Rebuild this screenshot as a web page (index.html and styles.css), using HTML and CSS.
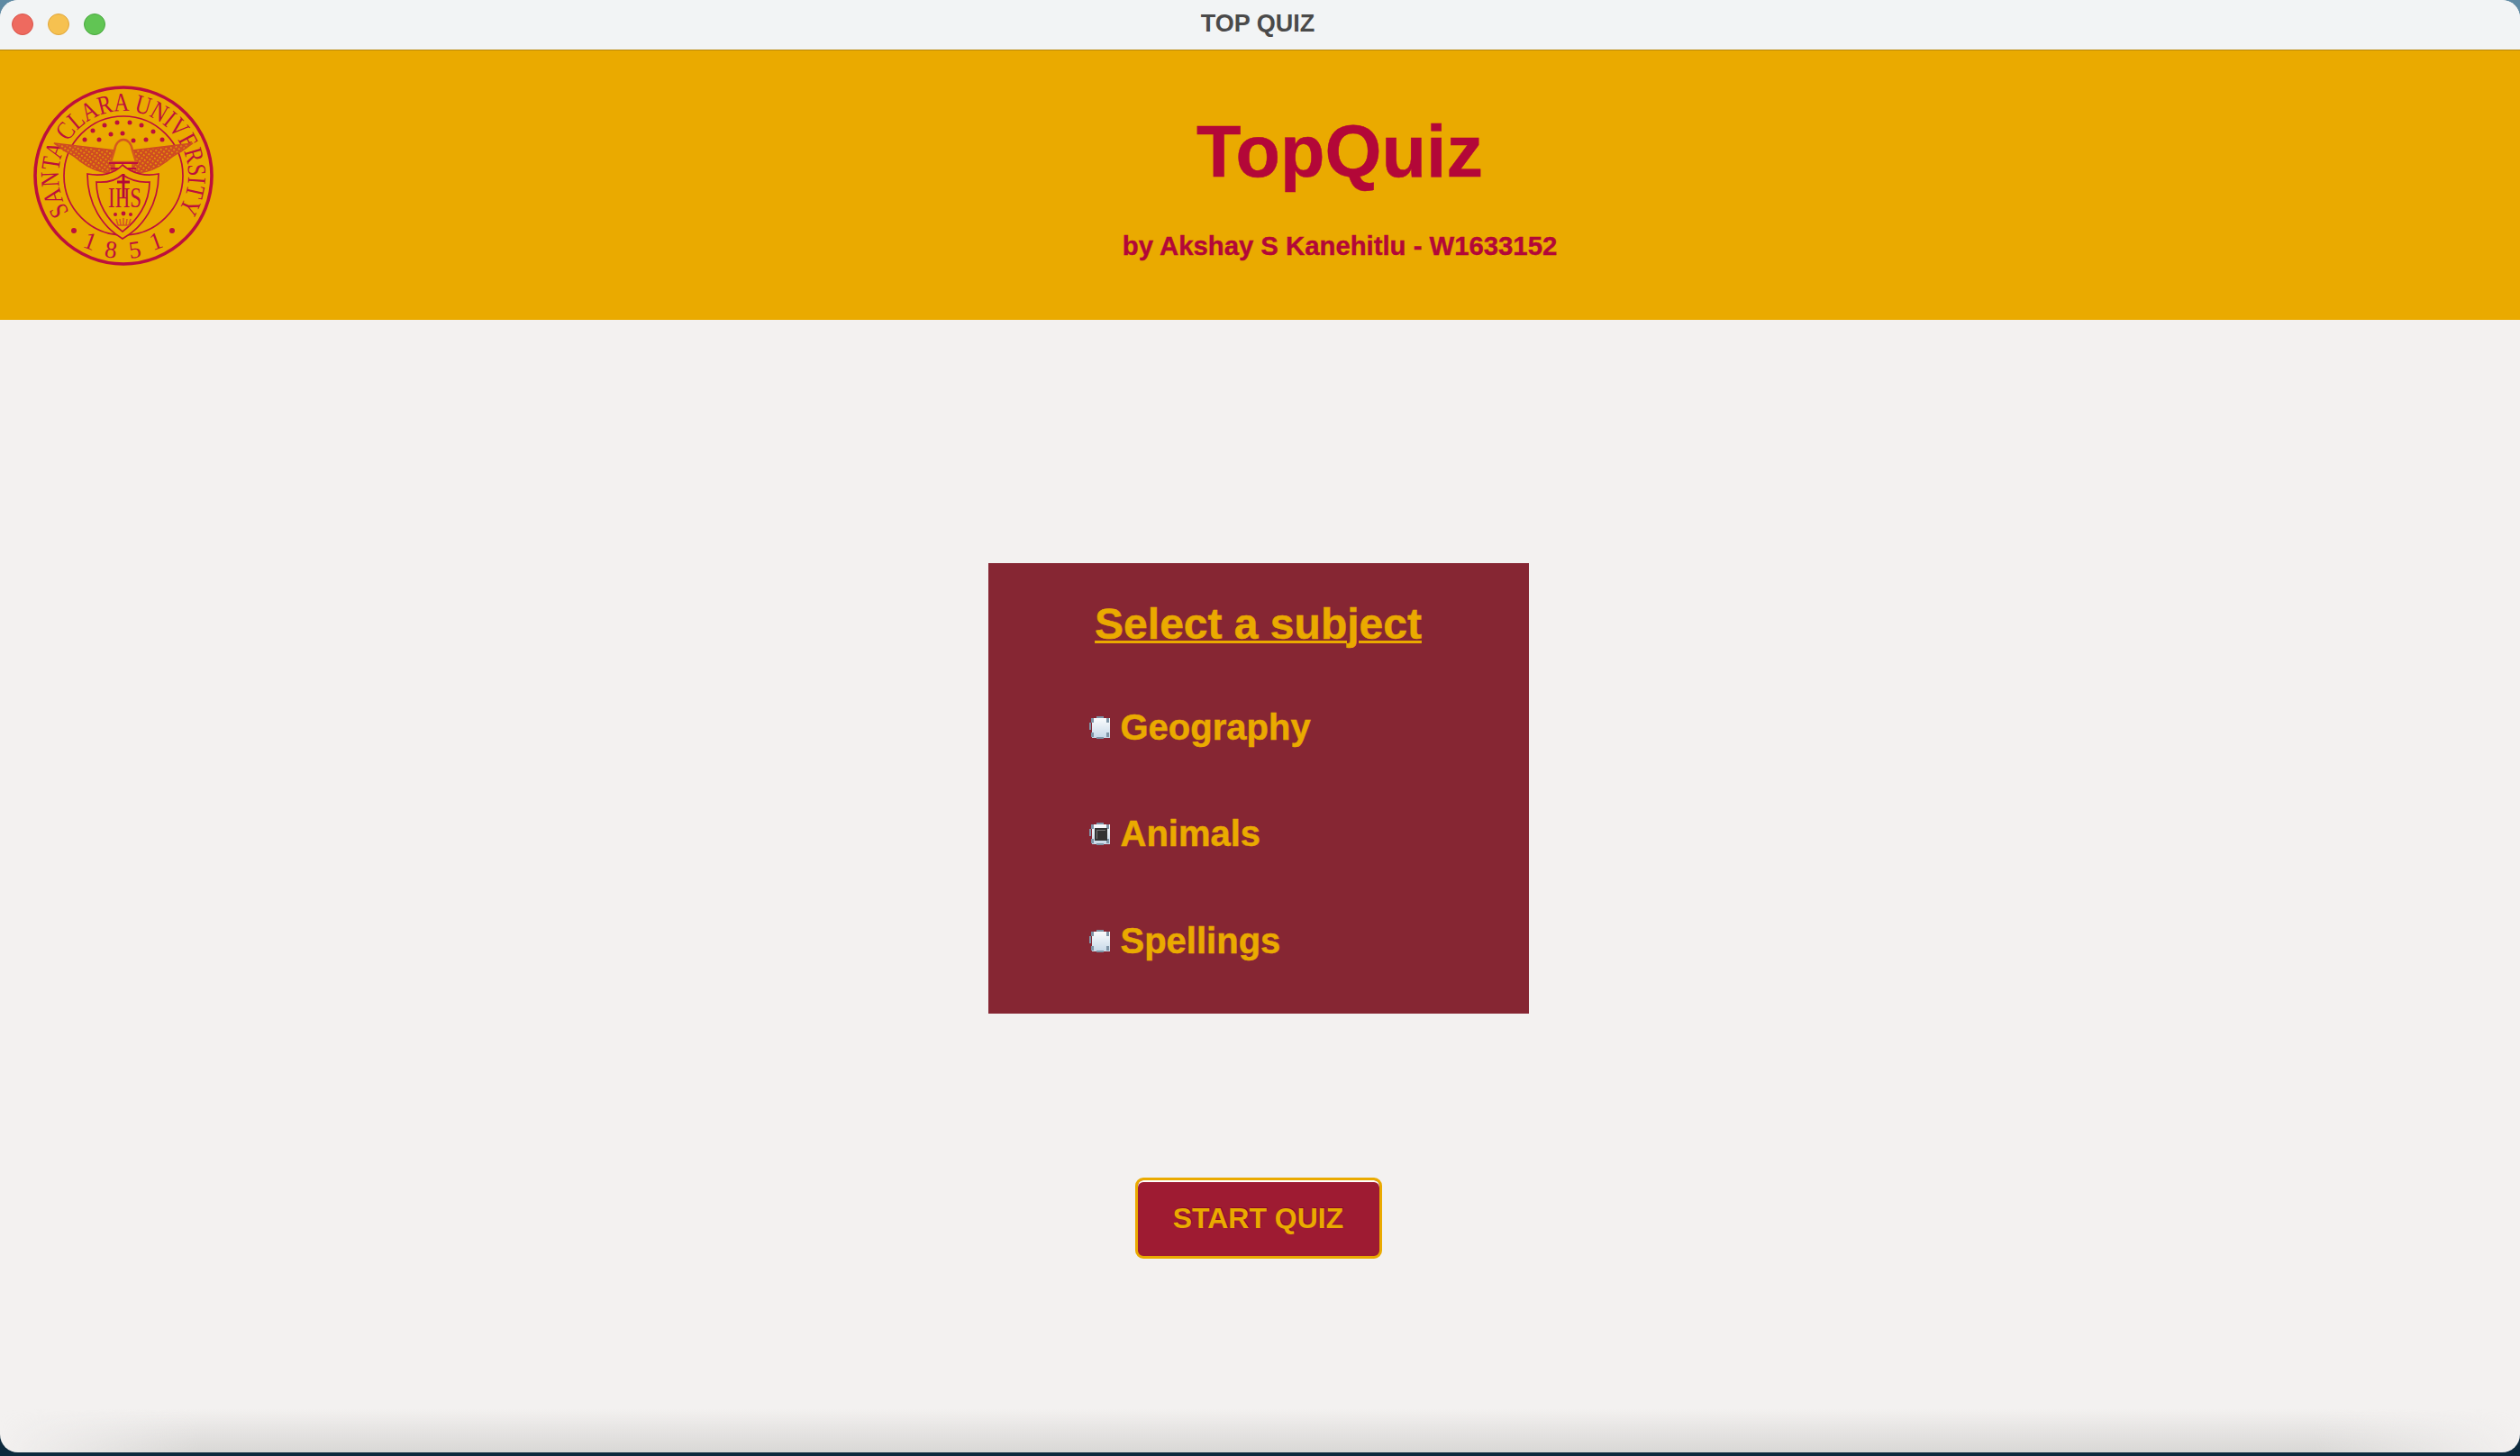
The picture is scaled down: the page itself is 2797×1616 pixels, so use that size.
FILE: index.html
```html
<html>

<head>
    <title>TOP QUIZ</title>
    <link rel="stylesheet" href="styles.css">
</head>

<body>
    <div class="window">
        <div class="titlebar">
            <div class="lights">
                <span class="light red"></span>
                <span class="light yellow"></span>
                <span class="light green"></span>
            </div>
            <span class="windowTitle">TOP QUIZ</span>
        </div>

        <header class="banner">
            <svg class="seal" viewBox="0 0 200 200">
                <defs>
                    <path id="topArc" d="M 40 140 A 72 72 0 1 1 160 140" />
                    <pattern id="feathers" width="4" height="4" patternUnits="userSpaceOnUse" patternTransform="rotate(35)">
                        <rect width="4" height="4" fill="#cf4a22" />
                        <rect width="1.6" height="1.6" fill="#eaaa00" />
                    </pattern>
                </defs>
                <circle cx="100" cy="100" r="98" class="ring" />
                <circle cx="100" cy="100" r="66" class="thin" />
                <text class="sealText"><textPath href="#topArc" startOffset="0" textLength="308" lengthAdjust="spacingAndGlyphs">SANTA CLARA UNIVERSITY</textPath></text>
                <text class="sealYear" x="60" y="181" text-anchor="middle" transform="rotate(20 60 181)">1</text>
                <text class="sealYear" x="85" y="191" text-anchor="middle" transform="rotate(8 85 191)">8</text>
                <text class="sealYear" x="114" y="191" text-anchor="middle" transform="rotate(-8 114 191)">5</text>
                <text class="sealYear" x="139" y="181" text-anchor="middle" transform="rotate(-20 139 181)">1</text>
                <circle cx="45" cy="161" r="3" class="fill" />
                <circle cx="154" cy="161" r="3" class="fill" />
                <g class="fill">
                    <circle cx="66" cy="50" r="2.5" />
                    <circle cx="79" cy="44" r="2.5" />
                    <circle cx="93" cy="41" r="2.5" />
                    <circle cx="107" cy="41" r="2.5" />
                    <circle cx="120" cy="44" r="2.5" />
                    <circle cx="133" cy="51" r="2.5" />
                    <circle cx="57" cy="60" r="2.5" />
                    <circle cx="73" cy="60" r="2.5" />
                    <circle cx="86" cy="54" r="2.5" />
                    <circle cx="99" cy="53" r="2.5" />
                    <circle cx="111" cy="61" r="2.5" />
                    <circle cx="125" cy="60" r="2.5" />
                    <circle cx="143" cy="60" r="2.5" />
                </g>
                <!-- eagle -->
                <path class="wing" d="M 23 64 L 90 72 L 90 98 L 84 97 C 70 96 60 90 52 84 C 46 78 40 75 36 73 Z" />
                <path class="wing" d="M 177 64 L 110 72 L 110 98 L 116 97 C 130 96 140 90 148 84 C 154 78 160 75 164 73 Z" />
                <path class="head" d="M 86 85 L 90 72 C 92 56 108 56 110 72 L 114 85 Z" />
                <path class="beak" d="M 84 86 L 116 86 M 86 92 L 114 92" />
                <!-- shield -->
                <path class="shieldFill" d="M 60 98 C 75 101 90 98 99 88 C 110 98 125 101 139 98 C 139 132 122 157 99 170 C 77 157 60 132 60 98 Z" />
                <path class="thin" d="M 70 107 C 82 108 92 105 99 99 C 108 105 118 108 129 107 C 129 131 115 150 99 162 C 83 150 70 131 70 107 Z" />
                <path class="cross" d="M 100 98 L 100 124 M 93 107 L 107 107" />
                <text class="ihs" x="83" y="135" textLength="37" lengthAdjust="spacingAndGlyphs">IHS</text>
                <path class="crown" d="M 92 148 L 94 155 L 106 155 L 108 148 M 96 148 L 97 155 M 100 147 L 100 155 M 104 148 L 103 155" />
                <circle cx="91" cy="143" r="2" class="fill" />
                <circle cx="100" cy="142" r="2.4" class="fill" />
                <circle cx="108" cy="143" r="2" class="fill" />
            </svg>
            <div class="bannerText">
                <h1>TopQuiz</h1>
                <h3>by Akshay S Kanehitlu - W1633152</h3>
            </div>
        </header>

        <main class="content">
            <form class="subjects">
                <h2>Select a subject</h2>
                <label class="subject"><input type="radio" name="subject">Geography</label>
                <label class="subject"><input type="radio" name="subject" checked>Animals</label>
                <label class="subject"><input type="radio" name="subject">Spellings</label>
            </form>
            <button class="start">START QUIZ</button>
        </main>
    </div>
</body>

</html>
```

FILE: styles.css
```css
:root {
    --gold: #eaaa00;
    --red: #b30738;
    --sealRed: #bd0f3c;
    --maroon: #862633;
    --button: #9e1b32;
    --page: #f3f1f0;
    --radioEdge: linear-gradient(#7e94a6, #7e94a6);
    --radioBody: linear-gradient(to bottom, #fbfcfd, #c6d8e8);
}

body {
    margin: 0;
    height: 1616px;
    overflow: hidden;
    font-family: "Liberation Sans", Arial, sans-serif;
    background: linear-gradient(to bottom, #5f8aa3 0, #5f8aa3 40px, #0d2a3d 1570px);
}

.window {
    height: 1612px;
    border-radius: 20px;
    overflow: hidden;
    display: flex;
    flex-direction: column;
    background-color: var(--page);
}

.titlebar {
    height: 55px;
    flex-shrink: 0;
    box-sizing: border-box;
    padding: 0 5px 2px 0;
    display: flex;
    align-items: center;
    justify-content: center;
    position: relative;
    background-color: #f2f4f5;
}

.lights {
    position: absolute;
    left: 13px;
    top: 15px;
    display: flex;
    gap: 16px;
}

.light {
    width: 24px;
    height: 24px;
    box-sizing: border-box;
    border-radius: 50%;
    border: 1px solid;
}

.red {
    background-color: #ee6a5f;
    border-color: #d9534a;
}

.yellow {
    background-color: #f6c150;
    border-color: #e0a63c;
}

.green {
    background-color: #61c554;
    border-color: #4aa83f;
}

.windowTitle {
    font-size: 27px;
    font-weight: bold;
    color: #4a4a4a;
}

.banner {
    height: 300px;
    flex-shrink: 0;
    box-sizing: border-box;
    display: flex;
    align-items: flex-start;
    padding: 39px 60px 0 37px;
    background-color: var(--gold);
    border-top: 1px solid #b8860b;
    color: var(--red);
}

.seal {
    width: 200px;
    height: 200px;
    flex-shrink: 0;
    fill: none;
    stroke: none;
}

.ring {
    stroke: var(--sealRed);
    stroke-width: 3.6;
}

.thin {
    stroke: var(--sealRed);
    stroke-width: 1.7;
    fill: none;
}

.fill {
    fill: var(--sealRed);
}

.wing {
    fill: url(#feathers);
    stroke: #cf4a22;
    stroke-width: 1.5;
}

.head {
    fill: var(--gold);
    stroke: #d4581f;
    stroke-width: 2.5;
}

.beak {
    stroke: var(--sealRed);
    stroke-width: 2;
    fill: none;
}

.shieldFill {
    fill: var(--gold);
    stroke: var(--sealRed);
    stroke-width: 1.7;
}

.cross {
    stroke: var(--red);
    stroke-width: 2.8;
    fill: none;
}

.crown {
    stroke: #d4581f;
    stroke-width: 1.6;
    fill: none;
}

.sealText {
    font-family: "Liberation Serif", serif;
    font-size: 29px;
    fill: var(--sealRed);
}

.sealYear {
    font-family: "Liberation Serif", serif;
    font-size: 27px;
    fill: var(--sealRed);
}

.ihs {
    font-family: "Liberation Serif", serif;
    font-size: 32px;
    fill: var(--sealRed);
}

.bannerText {
    flex: 1;
    text-align: center;
}

h1 {
    margin: 27px 0 0;
    font-size: 81px;
    line-height: 92px;
    -webkit-text-stroke: 0.5px;
}

h3 {
    margin: 42px 0 0;
    font-size: 29.3px;
    line-height: 34px;
    -webkit-text-stroke: 0.4px;
}

.content {
    flex: 1;
    display: flex;
    flex-direction: column;
    align-items: center;
    padding: 270px 4px 0 0;
    position: relative;
}

/* soft shadow along the bottom edge of the window */
.content::after {
    content: "";
    position: absolute;
    left: 0;
    right: 0;
    bottom: 0;
    height: 48px;
    background: linear-gradient(to bottom, transparent, #d8d7d5);
    -webkit-mask-image: linear-gradient(to right, transparent 0, #000 220px, #000 2570px, transparent 2797px);
    mask-image: linear-gradient(to right, transparent 0, #000 220px, #000 2570px, transparent 2797px);
}

.subjects {
    width: 600px;
    height: 500px;
    box-sizing: border-box;
    padding: 40px 0 0 112px;
    background-color: var(--maroon);
    color: var(--gold);
}

h2 {
    margin: 0 0 0 -112px;
    text-align: center;
    font-size: 48px;
    line-height: 56px;
    text-decoration: underline;
    text-decoration-thickness: 3px;
    -webkit-text-stroke: 0.5px;
}

.subject {
    display: flex;
    align-items: center;
    gap: 11px;
    height: 118.5px;
    font-size: 40px;
    font-weight: bold;
    -webkit-text-stroke: 0.5px;
}

.subject:first-of-type {
    margin-top: 27px;
}

.subject input {
    appearance: none;
    margin: 0;
    width: 24px;
    height: 25px;
    background:
        var(--radioEdge) 8px 0 / 8px 2px no-repeat,
        var(--radioEdge) 8px 23px / 8px 2px no-repeat,
        var(--radioEdge) 0 7px / 2px 8px no-repeat,
        var(--radioEdge) 2px 2px / 3px 5px no-repeat,
        var(--radioEdge) 19px 2px / 3px 5px no-repeat,
        var(--radioEdge) 2px 18px / 3px 5px no-repeat,
        var(--radioEdge) 19px 18px / 3px 5px no-repeat,
        var(--radioBody) 3px 2px / 20px 22px no-repeat;
}

.subject input:checked {
    background:
        linear-gradient(#777, #777) 8px 8px / 10px 1px no-repeat,
        linear-gradient(#777, #777) 8px 8px / 1px 10px no-repeat,
        linear-gradient(#333, #333) 6px 6px / 14px 14px no-repeat,
        var(--radioEdge) 8px 0 / 8px 2px no-repeat,
        var(--radioEdge) 8px 23px / 8px 2px no-repeat,
        var(--radioEdge) 0 7px / 2px 8px no-repeat,
        var(--radioEdge) 2px 2px / 3px 5px no-repeat,
        var(--radioEdge) 19px 2px / 3px 5px no-repeat,
        var(--radioEdge) 2px 18px / 3px 5px no-repeat,
        var(--radioEdge) 19px 18px / 3px 5px no-repeat,
        var(--radioBody) 3px 2px / 20px 22px no-repeat;
}

.start {
    margin-top: 166px;
    width: 274px;
    height: 90px;
    box-sizing: border-box;
    border: 3px solid var(--gold);
    border-radius: 9px;
    box-shadow: inset 0 2px 0 #fff;
    background-color: var(--button);
    color: var(--gold);
    font-family: inherit;
    font-size: 32px;
    font-weight: bold;
    text-shadow: 1px -1px 0 rgba(110, 0, 20, 0.5);
}
```
